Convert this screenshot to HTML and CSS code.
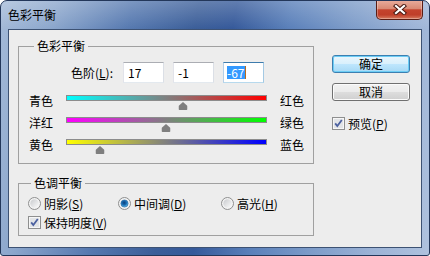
FILE: index.html
```html
<!DOCTYPE html>
<html lang="zh-CN">
<head>
    <meta charset="UTF-8">
    <title>色彩平衡</title>
    <link rel="stylesheet" href="styles.css">
</head>
<body>
    <div class="window">
        <div class="titlebar">
            <span class="title">色彩平衡</span>
            <button class="close" type="button">
                <svg width="14" height="11" viewBox="0 0 14 11">
                    <path d="M3 2 L11 9 M11 2 L3 9" stroke="#4a1a12" stroke-width="4.2" stroke-linecap="square" fill="none"/>
                    <path d="M3 2 L11 9 M11 2 L3 9" stroke="#ffffff" stroke-width="2.2" stroke-linecap="square" fill="none"/>
                </svg>
            </button>
        </div>

        <div class="client">
            <div class="main">
                <fieldset class="group balance">
                    <legend>色彩平衡</legend>
                    <div class="levels">
                        <span class="levels-label">色阶(<u>L</u>):</span>
                        <span class="field">17</span>
                        <span class="field">-1</span>
                        <span class="field focus"><span class="sel">-67</span><span class="caret"></span></span>
                    </div>
                    <div class="sliders">
                        <div class="slider-row">
                            <span>青色</span>
                            <div class="track cyan-red">
                                <svg class="thumb" style="left: 58.5%" width="9" height="8" viewBox="0 0 9 8"><path d="M4.5 0 L9 4 V7 Q9 8 8 8 H1 Q0 8 0 7 V4 Z" fill="#7f7f7f"/></svg>
                            </div>
                            <span>红色</span>
                        </div>
                        <div class="slider-row">
                            <span>洋红</span>
                            <div class="track magenta-green">
                                <svg class="thumb" style="left: 49.5%" width="9" height="8" viewBox="0 0 9 8"><path d="M4.5 0 L9 4 V7 Q9 8 8 8 H1 Q0 8 0 7 V4 Z" fill="#7f7f7f"/></svg>
                            </div>
                            <span>绿色</span>
                        </div>
                        <div class="slider-row">
                            <span>黄色</span>
                            <div class="track yellow-blue">
                                <svg class="thumb" style="left: 16.5%" width="9" height="8" viewBox="0 0 9 8"><path d="M4.5 0 L9 4 V7 Q9 8 8 8 H1 Q0 8 0 7 V4 Z" fill="#7f7f7f"/></svg>
                            </div>
                            <span>蓝色</span>
                        </div>
                    </div>
                </fieldset>

                <fieldset class="group tone">
                    <legend>色调平衡</legend>
                    <div class="options">
                        <label class="opt">
                            <svg class="icon" width="13" height="13" viewBox="0 0 13 13">
                                <defs><linearGradient id="ra" x1="0" y1="0" x2="1" y2="1"><stop offset="0" stop-color="#c9cbce"/><stop offset="1" stop-color="#fbfbfb"/></linearGradient></defs>
                                <circle cx="6.5" cy="6.5" r="6" fill="#f3f3f3" stroke="#8e8f8f"/>
                                <circle cx="6.5" cy="6.5" r="4.2" fill="url(#ra)"/>
                            </svg>阴影(<u>S</u>)
                        </label>
                        <label class="opt">
                            <svg class="icon" width="13" height="13" viewBox="0 0 13 13">
                                <defs><radialGradient id="rb" cx="0.45" cy="0.4" r="0.6"><stop offset="0" stop-color="#0c3f78"/><stop offset="0.55" stop-color="#1a6fb6"/><stop offset="1" stop-color="#6cc3ef"/></radialGradient></defs>
                                <circle cx="6.5" cy="6.5" r="6" fill="#f3f3f3" stroke="#8e8f8f"/>
                                <circle cx="6.5" cy="6.5" r="3.6" fill="url(#rb)" stroke="#1b5e98" stroke-width="0.6"/>
                            </svg>中间调(<u>D</u>)
                        </label>
                        <label class="opt">
                            <svg class="icon" width="13" height="13" viewBox="0 0 13 13">
                                <defs><linearGradient id="rc" x1="0" y1="0" x2="1" y2="1"><stop offset="0" stop-color="#c9cbce"/><stop offset="1" stop-color="#fbfbfb"/></linearGradient></defs>
                                <circle cx="6.5" cy="6.5" r="6" fill="#f3f3f3" stroke="#8e8f8f"/>
                                <circle cx="6.5" cy="6.5" r="4.2" fill="url(#rc)"/>
                            </svg>高光(<u>H</u>)
                        </label>
                    </div>
                    <label class="keep">
                        <svg class="icon" width="13" height="13" viewBox="0 0 13 13">
                            <rect x="0.5" y="0.5" width="12" height="12" fill="#f6f6f6" stroke="#8e8f8f"/>
                            <rect x="2" y="2" width="9" height="9" fill="#e2e4e7"/>
                            <path d="M3.2 6.4 L5.3 9 L9.8 3" stroke="#4c61a0" stroke-width="1.8" fill="none"/>
                        </svg>保持明度(<u>V</u>)
                    </label>
                </fieldset>
            </div>

            <div class="side">
                <button class="btn default" type="button">确定</button>
                <button class="btn" type="button">取消</button>
                <label class="preview">
                    <svg class="icon" width="13" height="13" viewBox="0 0 13 13">
                        <rect x="0.5" y="0.5" width="12" height="12" fill="#f6f6f6" stroke="#8e8f8f"/>
                        <rect x="2" y="2" width="9" height="9" fill="#e2e4e7"/>
                        <path d="M3.2 6.4 L5.3 9 L9.8 3" stroke="#4c61a0" stroke-width="1.8" fill="none"/>
                    </svg>预览(<u>P</u>)
                </label>
            </div>
        </div>
    </div>
</body>
</html>
```

FILE: styles.css
```css
body {
    margin: 0;
    background-color: #fff;
    font-family: "Noto Sans CJK SC", "Microsoft YaHei", sans-serif;
    font-size: 12px;
    color: #000;
}
.window {
    width: 430px;
    height: 256px;
    box-sizing: border-box;
    border: 1px solid #23375a;
    border-radius: 7px 7px 3px 3px;
    background:
        linear-gradient(to bottom, rgba(255,255,255,0.22), rgba(255,255,255,0) 28px),
        linear-gradient(100deg, #a4bad8 0%, #8ba6cc 12%, #5679b0 28%, #3b5e99 42%, #35599a 50%, #5a80ba 62%, #7d9cc9 75%, #9cb3d6 88%, #afc2de 100%);
    overflow: hidden;
}
.titlebar {
    height: 28px;
    display: flex;
    justify-content: space-between;
    align-items: flex-start;
}
.title {
    margin: 6px 0 0 7px;
    line-height: 16px;
}
.close {
    width: 47px;
    height: 20px;
    box-sizing: border-box;
    margin: -1px 6px 0 0;
    padding: 0;
    border: 1px solid #5a1d14;
    border-top: none;
    border-radius: 0 0 5px 5px;
    background: linear-gradient(#e9ae9e 0%, #d98a74 45%, #c4432d 52%, #bf3e29 78%, #d77b5f 100%);
    box-shadow: inset 0 0 0 1px rgba(255,255,255,0.3);
    display: flex;
    align-items: center;
    justify-content: center;
}
.client {
    margin: 0 7px;
    height: 219px;
    box-sizing: border-box;
    border: 1px solid #3d5273;
    background-color: #ededed;
    display: flex;
    padding: 8px 0 0 9px;
}
.main {
    width: 296px;
}
.group {
    margin: 0;
    width: 296px;
    min-width: 0;
    box-sizing: border-box;
    border: 1px solid #a0a0a0;
}
.group legend {
    padding: 0 3px;
    line-height: 16px;
}
.balance {
    padding: 8px 0 2px 10px;
}
.balance legend {
    margin-left: 5px;
}
.levels {
    display: flex;
    align-items: center;
    height: 21px;
}
.levels-label {
    width: 84px;
    margin-right: 10px;
    text-align: right;
}
.field {
    width: 41px;
    height: 21px;
    box-sizing: border-box;
    margin-right: 9px;
    padding-left: 4px;
    border: 1px solid;
    border-color: #abadb3 #dbdfe6 #e3e9ef #e2e3ea;
    background-color: #fff;
    line-height: 19px;
}
.field.focus {
    display: flex;
    align-items: center;
    padding-left: 3px;
    border-color: #3d7bad #a4c9e3 #b7d9ed #b5cfe7;
}
.sel {
    background-color: #3399ff;
    color: #fff;
    line-height: 13px;
    padding-right: 1px;
}
.caret {
    width: 1px;
    height: 13px;
    background-color: #b86a1c;
}
.sliders {
    margin-top: 12px;
}
.slider-row {
    display: grid;
    grid-template-columns: 24px 201px auto;
    column-gap: 13px;
    height: 22px;
    align-items: start;
}
.slider-row span {
    line-height: 12px;
    white-space: nowrap;
}
.track {
    position: relative;
    height: 6px;
    box-sizing: border-box;
    border: 1px solid #8c8c8c;
}
.cyan-red {
    background: linear-gradient(to right, #00ffff, #ff0000);
}
.magenta-green {
    background: linear-gradient(to right, #ff00ff, #00ff00);
}
.yellow-blue {
    background: linear-gradient(to right, #ffff00, #0000ff);
}
.thumb {
    position: absolute;
    top: 6px;
    transform: translateX(-50%);
}
.tone {
    margin-top: 11px;
    padding: 3px 0 4px 9px;
}
.tone legend {
    margin-left: 3px;
}
.options {
    display: flex;
    height: 18px;
}
.opt,
.keep,
.preview {
    display: flex;
    align-items: center;
}
.opt:nth-child(1) {
    width: 90px;
}
.opt:nth-child(2) {
    width: 103px;
}
.keep {
    height: 18px;
    margin-top: 1px;
}
.icon {
    margin-right: 3px;
    flex: none;
}
.side {
    margin-left: 18px;
    padding-top: 17px;
    display: flex;
    flex-direction: column;
    align-items: flex-start;
}
.btn {
    width: 78px;
    height: 18px;
    box-sizing: border-box;
    padding: 0;
    border: 1px solid #707070;
    border-radius: 3px;
    background: linear-gradient(#f2f2f2 0%, #ebebeb 48%, #dddddd 52%, #cfcfcf 100%);
    box-shadow: inset 0 0 0 1px #fbfbfb;
    font: inherit;
    line-height: 16px;
    color: #000;
}
.btn.default {
    border-color: #3c7fb1;
    background: linear-gradient(#eaf6fd 0%, #d9f0fc 48%, #bee6fd 52%, #a7d9f5 100%);
    box-shadow: inset 0 0 0 1px #6ccdf5;
}
.btn + .btn {
    margin-top: 10px;
}
.preview {
    margin-top: 16px;
    height: 13px;
}
```
